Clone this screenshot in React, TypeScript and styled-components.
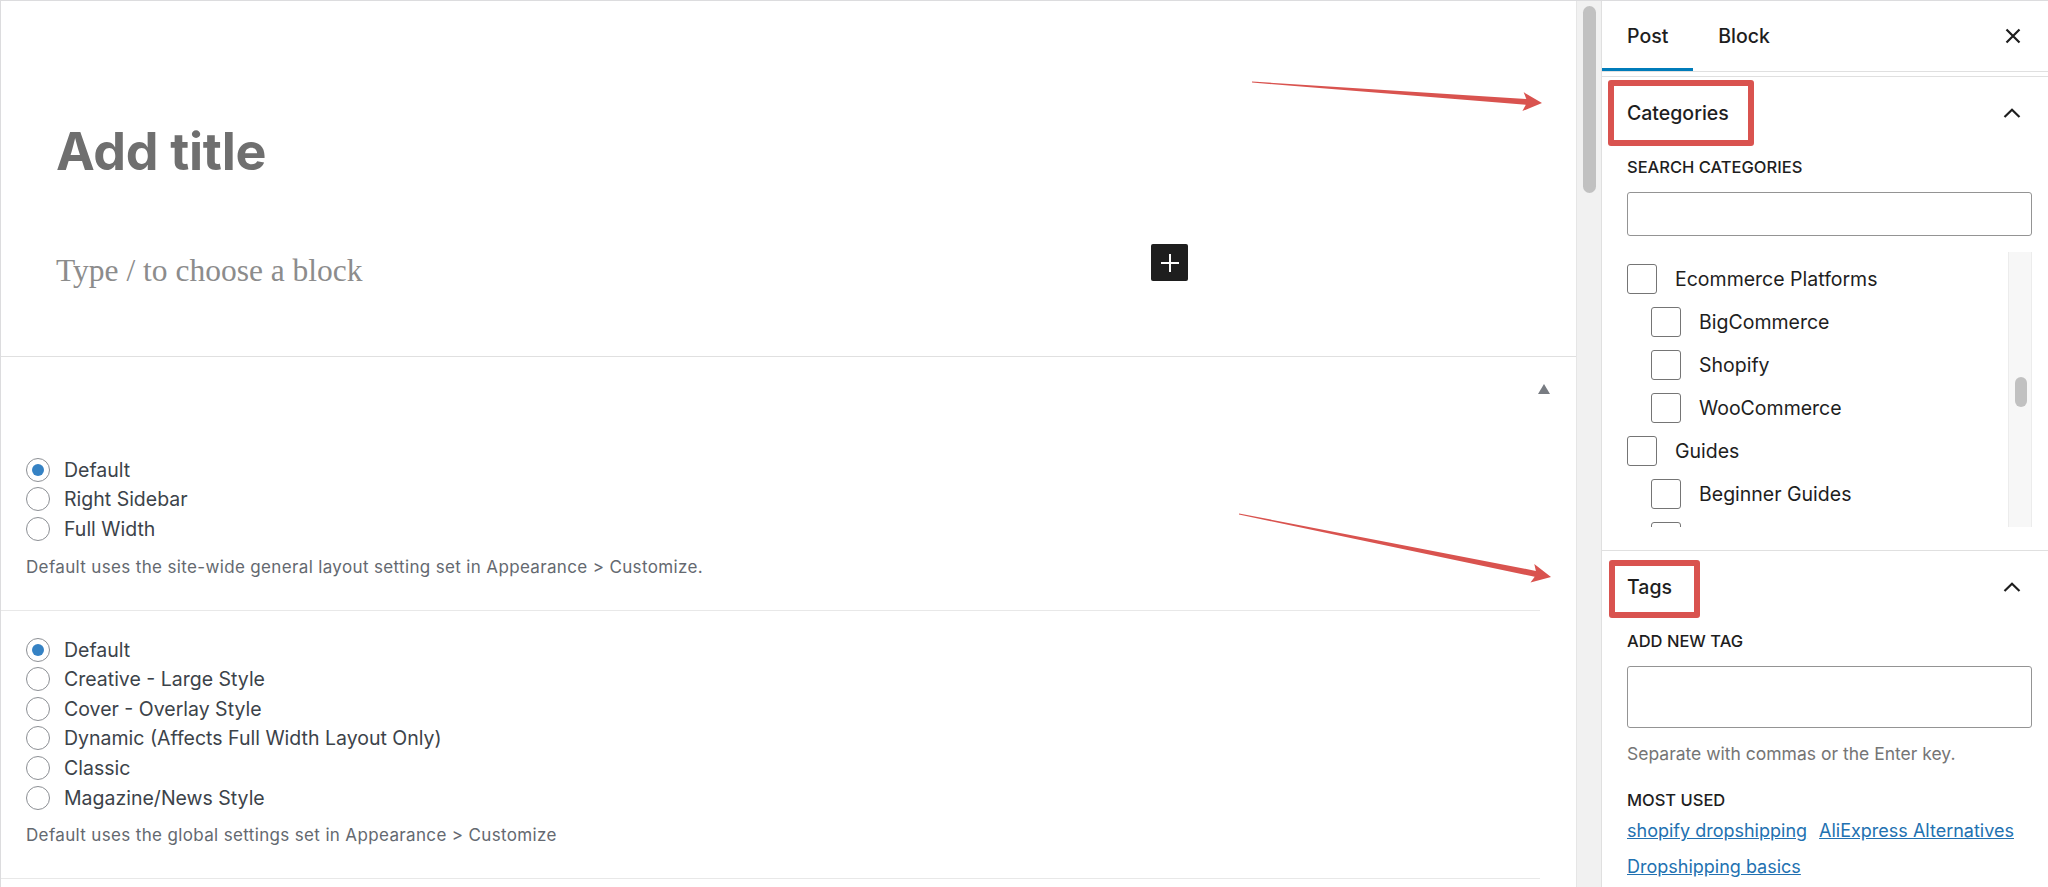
import React from "react";
import styled, { createGlobalStyle } from "styled-components";

const GlobalStyle = createGlobalStyle`
  html, body {
    margin: 0;
    padding: 0;
    background: #fff;
  }
  body {
    font-family: Inter, "Noto Sans", "Liberation Sans", sans-serif;
    color: #1e1e1e;
  }
  * {
    box-sizing: border-box;
  }
`;

const Page = styled.div`
  position: relative;
  display: flex;
  width: 2048px;
  height: 887px;
  overflow: hidden;
  border-top: 1px solid #dcdcde;
  border-left: 1px solid #dcdcde;
`;

/* ---------- editor (left) ---------- */

const Main = styled.div`
  flex: 1;
  min-width: 0;
  display: flex;
  flex-direction: column;
`;

const Editor = styled.div`
  height: 356px;
  flex-shrink: 0;
  padding-top: 120px;
  border-bottom: 1px solid #e0e0e0;
`;

const Title = styled.h1`
  margin: 0;
  padding-left: 55px;
  font-family: Inter, "Liberation Sans", sans-serif;
  font-size: 52px;
  font-weight: 700;
  line-height: 62px;
  color: #6f6f6f;
  letter-spacing: -0.3px;
`;

const ParagraphRow = styled.div`
  display: flex;
  align-items: flex-start;
  justify-content: space-between;
  width: 1187px;
  margin-top: 68px;
  padding-left: 55px;
`;

const Placeholder = styled.p`
  margin: 0;
  font-family: "Liberation Serif", "DejaVu Serif", serif;
  font-size: 31.5px;
  line-height: 40px;
  color: #8c8c8c;
`;

const InserterButton = styled.button`
  display: grid;
  place-items: center;
  width: 37px;
  height: 37px;
  margin-top: -7px;
  padding: 0;
  border: none;
  border-radius: 2px;
  background: #1e1e1e;
  cursor: pointer;
`;

const MetaHeader = styled.div`
  display: flex;
  justify-content: flex-end;
  height: 74px;
  flex-shrink: 0;
  padding: 27px 26px 0 0;
`;

const ToggleArrow = styled.span`
  width: 0;
  height: 0;
  border-left: 6px solid transparent;
  border-right: 6px solid transparent;
  border-bottom: 10px solid #787c82;
`;

const MetaSection = styled.div`
  margin-right: 36px;
  padding: 24px 0 31px 25px;
  border-bottom: 1px solid #e8e8e8;
`;

const RadioRow = styled.label`
  display: flex;
  align-items: center;
  gap: 14px;
  height: 29.6px;
  font-size: 19.5px;
  color: #3c434a;
`;

const Radio = styled.span<{ $checked?: boolean }>`
  display: grid;
  place-items: center;
  width: 24px;
  height: 24px;
  flex-shrink: 0;
  border: 1.5px solid #8c8f94;
  border-radius: 50%;
  background: #fff;

  &::after {
    content: "";
    width: 12px;
    height: 12px;
    border-radius: 50%;
    background: ${({ $checked }) => ($checked ? "#3582c4" : "transparent")};
  }
`;

const MetaHelp = styled.p`
  margin: 12px 0 0;
  font-size: 17px;
  line-height: 23px;
  letter-spacing: 0.35px;
  color: #646970;
`;

/* ---------- page scrollbar ---------- */

const ScrollTrack = styled.div`
  width: 26px;
  flex-shrink: 0;
  padding: 5px 0 0 6px;
  background: #f1f1f1;
  border-left: 1px solid #e6e6e6;
  border-right: 1px solid #e0e0e0;
`;

const ScrollThumb = styled.div<{ $w: number; $h: number }>`
  width: ${({ $w }) => $w}px;
  height: ${({ $h }) => $h}px;
  border-radius: ${({ $w }) => $w / 2}px;
  background: #c1c1c1;
`;

/* ---------- sidebar ---------- */

const Sidebar = styled.aside`
  width: 446px;
  flex-shrink: 0;
  display: flex;
  flex-direction: column;
`;

const SidebarHeader = styled.div`
  display: flex;
  align-items: stretch;
  height: 71px;
  flex-shrink: 0;
  padding-right: 27px;
  border-bottom: 1px solid #e0e0e0;
`;

const Tab = styled.button<{ $active?: boolean }>`
  display: flex;
  align-items: center;
  padding: 0 25px;
  border: none;
  background: none;
  font-family: inherit;
  font-size: 19.5px;
  font-weight: 500;
  color: #1e1e1e;
  box-shadow: ${({ $active }) => ($active ? "inset 0 -3px 0 #007cba" : "none")};
  cursor: pointer;
`;

const CloseButton = styled.button`
  display: grid;
  place-items: center;
  margin-left: auto;
  padding: 0;
  border: none;
  background: none;
  cursor: pointer;
`;

const Panel = styled.section<{ $first?: boolean }>`
  margin-top: ${({ $first }) => ($first ? "4px" : "0")};
  border-top: 1px solid #e0e0e0;
`;

const PanelHeader = styled.div`
  display: flex;
  align-items: center;
  justify-content: space-between;
  height: 72px;
  padding: 0 27px 0 25px;
`;

const PanelTitle = styled.h2`
  margin: 0;
  font-size: 19.5px;
  font-weight: 500;
  line-height: 24px;
  color: #1e1e1e;
`;

const Highlight = styled.span<{ $t: number; $r: number; $b: number; $l: number }>`
  display: inline-block;
  border: 6px solid #d9534f;
  border-radius: 3px;
  padding: ${({ $t, $r, $b, $l }) => `${$t}px ${$r}px ${$b}px ${$l}px`};
  margin: ${({ $t, $r, $b, $l }) => `-${$t + 6}px -${$r + 6}px -${$b + 6}px -${$l + 6}px`};
`;

const PanelBody = styled.div`
  padding: 7px 16px 23px 25px;
`;

const FieldLabel = styled.div<{ $gap?: number }>`
  margin-top: ${({ $gap }) => $gap ?? 0}px;
  font-size: 16.5px;
  font-weight: 500;
  line-height: 23px;
  text-transform: uppercase;
  color: #1e1e1e;
`;

const TextInput = styled.input<{ $h: number }>`
  display: block;
  width: 100%;
  height: ${({ $h }) => $h}px;
  margin-top: 13px;
  padding: 0 12px;
  border: 1px solid #949494;
  border-radius: 3px;
  font-family: inherit;
  font-size: 19.5px;
  background: #fff;
`;

const ListWrap = styled.div`
  display: flex;
  height: 275px;
  margin-top: 16px;
  overflow: hidden;
`;

const CategoryList = styled.div`
  flex: 1;
  padding-top: 5.5px;
`;

const CategoryRow = styled.label<{ $child?: boolean }>`
  display: flex;
  align-items: center;
  gap: 18px;
  height: 43px;
  padding-left: ${({ $child }) => ($child ? "24px" : "0")};
  font-size: 19.5px;
  color: #1e1e1e;
`;

const Checkbox = styled.span`
  width: 30px;
  height: 30px;
  flex-shrink: 0;
  border: 1.5px solid #757575;
  border-radius: 3px;
  background: #fff;
`;

const ListScroll = styled.div`
  width: 24px;
  flex-shrink: 0;
  padding: 125px 0 0 6px;
  background: #f7f7f7;
  border-left: 1px solid #ececec;
  border-right: 1px solid #ececec;
`;

const Help = styled.p`
  margin: 13px 0 0;
  font-size: 17.5px;
  line-height: 25px;
  color: #757575;
`;

const TagLinks = styled.div`
  display: flex;
  flex-wrap: wrap;
  column-gap: 12px;
  margin-top: 1px;
  font-size: 18px;
  line-height: 36px;
`;

const TagLink = styled.a`
  color: #2271b1;
  text-decoration: underline;
  white-space: nowrap;
`;

/* ---------- annotation arrows ---------- */

const Annotations = styled.svg`
  position: absolute;
  top: -1px;
  left: -1px;
  pointer-events: none;
`;

type Pt = [number, number];

const arrowPoints = (from: Pt, to: Pt) => {
  const dx = to[0] - from[0];
  const dy = to[1] - from[1];
  const len = Math.hypot(dx, dy);
  const ux = dx / len;
  const uy = dy / len;
  const nx = -uy;
  const ny = ux;
  const bx = to[0] - ux * 16;
  const by = to[1] - uy * 16;
  const cx = to[0] - ux * 19;
  const cy = to[1] - uy * 19;
  const p = (x: number, y: number, k: number) =>
    `${(x + nx * k).toFixed(1)},${(y + ny * k).toFixed(1)}`;
  return [
    p(from[0], from[1], -0.5),
    p(bx, by, -3),
    p(cx, cy, -9.5),
    `${to[0]},${to[1]}`,
    p(cx, cy, 9.5),
    p(bx, by, 3),
    p(from[0], from[1], 0.5),
  ].join(" ");
};

const layoutOptions = ["Default", "Right Sidebar", "Full Width"];
const styleOptions = [
  "Default",
  "Creative - Large Style",
  "Cover - Overlay Style",
  "Dynamic (Affects Full Width Layout Only)",
  "Classic",
  "Magazine/News Style",
];

// last row is scrolled almost out of view: only its checkbox edge shows
const categories = [
  { name: "Ecommerce Platforms", child: false },
  { name: "BigCommerce", child: true },
  { name: "Shopify", child: true },
  { name: "WooCommerce", child: true },
  { name: "Guides", child: false },
  { name: "Beginner Guides", child: true },
  { name: "", child: true },
];

const ChevronUp = () => (
  <svg width="18" height="10" viewBox="0 0 18 10" fill="none">
    <path d="M1.5 9 L9 1.8 L16.5 9" stroke="#1e1e1e" strokeWidth="2.2" />
  </svg>
);

export default function App() {
  return (
    <>
      <GlobalStyle />
      <Page>
        <Main>
          <Editor>
            <Title>Add title</Title>
            <ParagraphRow>
              <Placeholder>Type / to choose a block</Placeholder>
              <InserterButton aria-label="Add block">
                <svg width="20" height="20" viewBox="0 0 20 20">
                  <path d="M10 1 V19 M1 10 H19" stroke="#fff" strokeWidth="2" />
                </svg>
              </InserterButton>
            </ParagraphRow>
          </Editor>

          <MetaHeader>
            <ToggleArrow />
          </MetaHeader>

          <MetaSection>
            {layoutOptions.map((o, i) => (
              <RadioRow key={o}>
                <Radio $checked={i === 0} />
                {o}
              </RadioRow>
            ))}
            <MetaHelp>
              Default uses the site-wide general layout setting set in Appearance &gt; Customize.
            </MetaHelp>
          </MetaSection>

          <MetaSection>
            {styleOptions.map((o, i) => (
              <RadioRow key={o}>
                <Radio $checked={i === 0} />
                {o}
              </RadioRow>
            ))}
            <MetaHelp>Default uses the global settings set in Appearance &gt; Customize</MetaHelp>
          </MetaSection>
        </Main>

        <ScrollTrack>
          <ScrollThumb $w={13} $h={187} />
        </ScrollTrack>

        <Sidebar>
          <SidebarHeader>
            <Tab $active>Post</Tab>
            <Tab>Block</Tab>
            <CloseButton aria-label="Close settings">
              <svg width="16" height="16" viewBox="0 0 16 16">
                <path d="M1.5 1.5 L14.5 14.5 M14.5 1.5 L1.5 14.5" stroke="#1e1e1e" strokeWidth="2.2" />
              </svg>
            </CloseButton>
          </SidebarHeader>

          <Panel $first>
            <PanelHeader>
              <PanelTitle>
                <Highlight $t={15} $r={19} $b={15} $l={13}>
                  Categories
                </Highlight>
              </PanelTitle>
              <ChevronUp />
            </PanelHeader>
            <PanelBody>
              <FieldLabel>Search Categories</FieldLabel>
              <TextInput $h={44} />
              <ListWrap>
                <CategoryList>
                  {categories.map((c, i) => (
                    <CategoryRow key={i} $child={c.child}>
                      <Checkbox />
                      {c.name}
                    </CategoryRow>
                  ))}
                </CategoryList>
                <ListScroll>
                  <ScrollThumb $w={12} $h={30} />
                </ListScroll>
              </ListWrap>
            </PanelBody>
          </Panel>

          <Panel>
            <PanelHeader>
              <PanelTitle>
                <Highlight $t={9} $r={22} $b={13} $l={12}>
                  Tags
                </Highlight>
              </PanelTitle>
              <ChevronUp />
            </PanelHeader>
            <PanelBody>
              <FieldLabel>Add New Tag</FieldLabel>
              <TextInput $h={62} />
              <Help>Separate with commas or the Enter key.</Help>
              <FieldLabel $gap={23}>Most Used</FieldLabel>
              <TagLinks>
                <TagLink href="#">shopify dropshipping</TagLink>
                <TagLink href="#">AliExpress Alternatives</TagLink>
                <TagLink href="#">Dropshipping basics</TagLink>
              </TagLinks>
            </PanelBody>
          </Panel>
        </Sidebar>

        <Annotations width="2048" height="887" viewBox="0 0 2048 887">
          <polygon points={arrowPoints([1252, 82], [1542, 103])} fill="#d9534f" />
          <polygon points={arrowPoints([1239, 514], [1551, 577])} fill="#d9534f" />
        </Annotations>
      </Page>
    </>
  );
}
